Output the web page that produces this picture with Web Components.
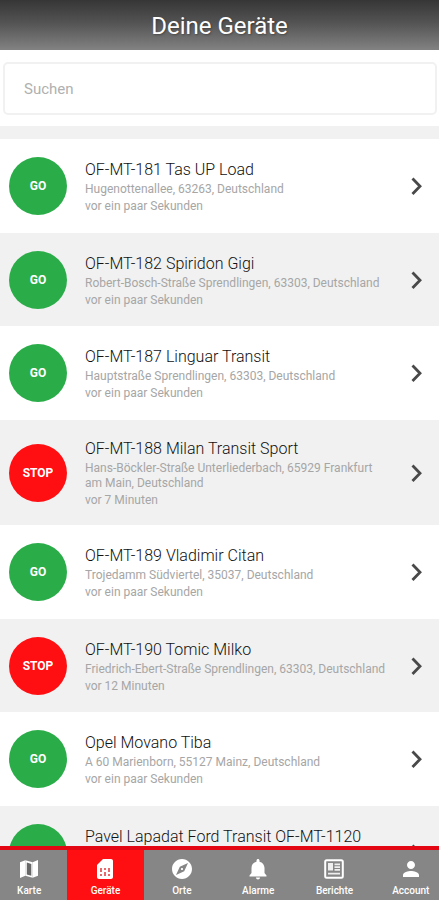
<!DOCTYPE html>
<html lang="de">
<head>
<meta charset="utf-8">
<meta name="viewport" content="width=device-width, initial-scale=1">
<title>Deine Geräte</title>
<style>
  html, body { height: 100%; margin: 0; }
  body { font-family: Roboto, "Liberation Sans", sans-serif; background: #fff; overflow: hidden; }
</style>
</head>
<body>
<app-screen>
  <app-header slot="header">Deine Geräte</app-header>
  <search-field slot="search" label="Suchen"></search-field>
  <device-row status="go"><span slot="name">OF-MT-181 Tas UP Load</span><span slot="address">Hugenottenallee, 63263, Deutschland</span><span slot="time">vor ein paar Sekunden</span></device-row>
  <device-row status="go" shaded><span slot="name">OF-MT-182 Spiridon Gigi</span><span slot="address">Robert-Bosch-Straße Sprendlingen, 63303, Deutschland</span><span slot="time">vor ein paar Sekunden</span></device-row>
  <device-row status="go"><span slot="name">OF-MT-187 Linguar Transit</span><span slot="address">Hauptstraße Sprendlingen, 63303, Deutschland</span><span slot="time">vor ein paar Sekunden</span></device-row>
  <device-row status="stop" shaded><span slot="name">OF-MT-188 Milan Transit Sport</span><span slot="address">Hans-Böckler-Straße Unterliederbach, 65929 Frankfurt am Main, Deutschland</span><span slot="time">vor 7 Minuten</span></device-row>
  <device-row status="go"><span slot="name">OF-MT-189 Vladimir Citan</span><span slot="address">Trojedamm Südviertel, 35037, Deutschland</span><span slot="time">vor ein paar Sekunden</span></device-row>
  <device-row status="stop" shaded><span slot="name">OF-MT-190 Tomic Milko</span><span slot="address">Friedrich-Ebert-Straße Sprendlingen, 63303, Deutschland</span><span slot="time">vor 12 Minuten</span></device-row>
  <device-row status="go"><span slot="name">Opel Movano Tiba</span><span slot="address">A 60 Marienborn, 55127 Mainz, Deutschland</span><span slot="time">vor ein paar Sekunden</span></device-row>
  <device-row status="go" shaded><span slot="name">Pavel Lapadat Ford Transit OF-MT-1120</span></device-row>
  <tab-bar slot="tabs">
    <tab-item icon="map">Karte</tab-item>
    <tab-item icon="sim" active>Geräte</tab-item>
    <tab-item icon="compass">Orte</tab-item>
    <tab-item icon="bell">Alarme</tab-item>
    <tab-item icon="report">Berichte</tab-item>
    <tab-item icon="person">Account</tab-item>
  </tab-bar>
</app-screen>

<script>
class BaseElement extends HTMLElement {
  render(html) {
    this.attachShadow({ mode: 'open' }).innerHTML = html;
  }
}

customElements.define('app-screen', class extends BaseElement {
  connectedCallback() {
    this.render(`
      <style>
        :host { display: flex; flex-direction: column; height: 100vh; overflow: hidden; }
        main { flex: 1; min-height: 0; overflow: hidden; display: flex; flex-direction: column; }
        .list { flex: 1; min-height: 0; overflow: hidden; border-top: 13px solid #f1f1f1; }
      </style>
      <slot name="header"></slot>
      <main>
        <slot name="search"></slot>
        <div class="list"><slot></slot></div>
      </main>
      <slot name="tabs"></slot>`);
  }
});

customElements.define('app-header', class extends BaseElement {
  connectedCallback() {
    this.render(`
      <style>
        :host { display: block; background: linear-gradient(#363636, #535353 45%, #828282); color: #fff; }
        h1 { margin: 0; padding: 11px 0 9px; font-size: 24px; line-height: 30px; font-weight: 400; text-align: center;
             text-shadow: 1px 1px 2px rgba(0, 0, 0, .3); }
      </style>
      <h1><slot></slot></h1>`);
  }
});

customElements.define('search-field', class extends BaseElement {
  connectedCallback() {
    const label = this.getAttribute('label');
    this.render(`
      <style>
        :host { display: block; padding: 12px 2px 11px 3px; }
        input { display: block; width: 100%; height: 53px; box-sizing: border-box; padding: 0 19px;
                border: 2px solid #f1f1f1; border-radius: 5px; background: #fff; outline: 0;
                font: 15px Roboto, "Liberation Sans", sans-serif; color: #333; }
        input::placeholder { color: #b0b0b0; opacity: 1; }
      </style>
      <input type="search" placeholder="${label}" aria-label="${label}">`);
  }
});

customElements.define('device-row', class extends BaseElement {
  connectedCallback() {
    const stop = this.getAttribute('status') === 'stop';
    this.render(`
      <style>
        :host { display: block; background: #fff; border-bottom: 1px solid #fff; }
        :host([shaded]) { background: #f1f1f1; border-bottom: 0; }
        a { display: flex; align-items: center; box-sizing: border-box; min-height: 93px; padding: 17px 8px 17px 9px;
            color: inherit; text-decoration: none; }
        .badge { flex: none; display: grid; place-items: center; width: 58px; height: 58px;
                 border-radius: 50%; background: #2aad49; color: #fff; font-size: 12px; font-weight: 700; }
        .badge.stop { background: #ff0f12; }
        .text { flex: 1; min-width: 0; margin: 0 13px 0 18px; }
        .name { font-size: 16px; line-height: 24px; font-weight: 300; color: #111; }
        .address { min-height: 15px; padding-bottom: 2px; }
        .small { font-size: 12px; line-height: 15px; color: #a6a6a6; }
        .time { min-height: 15px; }
        svg { flex: none; width: 28px; height: 28px; }
      </style>
      <a href="#">
        <span class="badge ${stop ? 'stop' : ''}">${stop ? 'STOP' : 'GO'}</span>
        <div class="text">
          <div class="name"><slot name="name"></slot></div>
          <div class="small address"><slot name="address"></slot></div>
          <div class="small time"><slot name="time"></slot></div>
        </div>
        <svg viewBox="0 0 28 28" aria-hidden="true"><path d="M9.500 6.500 L17 14.300 L9.500 22" fill="none" stroke="#494949" stroke-width="2.800"/></svg>
      </a>`);
  }
});

customElements.define('tab-bar', class extends BaseElement {
  connectedCallback() {
    this.render(`
      <style>
        :host { display: block; flex: none; overflow: hidden; background: #868686; border-top: 4px solid #e30613; }
        nav { display: grid; grid-template-columns: repeat(6, 1fr); margin: 0 -10px 0 -9px; }
      </style>
      <nav><slot></slot></nav>`);
  }
});

const ICONS = {
  map: '<path d="M3 5.300 L8.300 3.300 V18.800 L3 20.900z M15.700 5.200 L21 3.100 V18.700 L15.700 20.700z"/><path d="M8.300 3.300 L15.700 5.200 V20.700 L8.300 18.800z"/><path d="M9.800 5.500 L14.300 6.900 V18.800 L9.800 17.400z" fill="#686868"/>',
  sim: '<path d="M10 2h8c1.100 0 2 .9 2 2v16c0 1.100-.9 2-2 2H6c-1.100 0-2-.9-2-2V8z"/><path d="M7 11h2v4H7zM11 11h2v2h-2zM15 11h2v4h-2zM7 17h2v2H7zM11 15h2v4h-2zM15 17h2v2h-2z" fill="#e8696b"/>',
  compass: '<path fill-rule="evenodd" d="M12 10.900c-.61 0-1.100.49-1.100 1.100s.49 1.100 1.100 1.100c.61 0 1.100-.49 1.100-1.100s-.49-1.100-1.100-1.100zM12 2C6.480 2 2 6.480 2 12s4.480 10 10 10 10-4.480 10-10S17.520 2 12 2zm2.190 12.190L6 18l3.810-8.190L18 6l-3.810 8.190z"/>',
  bell: '<path d="M12 22.500c1.100 0 2-.9 2-2h-4c0 1.100.89 2 2 2zM18.500 16v-5c0-3.070-1.900-5.640-5-6.320V3.500c0-.83-.67-1.500-1.500-1.500s-1.500.67-1.500 1.500v1.180c-3.100.68-5 3.240-5 6.320v5l-2 2.500v1h17v-1z"/>',
  report: '<rect x="3.200" y="3.200" width="17.600" height="17.600" rx="1.500" fill="#868686" stroke="#fff" stroke-width="2"/><path d="M6 6h5v7.500H6zM12.500 6.500h5.500v1.700h-5.500zM12.500 9.300h5.500v1.700h-5.500zM12.500 12.100h5.500v1.700h-5.500zM6 15.800h12v1.700H6z" fill="#eee"/>',
  person: '<path d="M12 12c2.210 0 4-1.790 4-4s-1.790-4-4-4-4 1.790-4 4 1.790 4 4 4zm0 2c-2.670 0-8 1.340-8 4v2h16v-2c0-2.660-5.330-4-8-4z"/>'
};

customElements.define('tab-item', class extends BaseElement {
  connectedCallback() {
    this.render(`
      <style>
        :host { display: block; }
        :host([active]) { background: #ff0f12; }
        a { display: flex; flex-direction: column; align-items: center; gap: 3px; padding: 7px 0 2px;
            color: #fff; text-decoration: none; font-size: 10px; line-height: 14px; font-weight: 500; }
        svg { display: block; width: 24px; height: 24px; fill: #fff; }
      </style>
      <a href="#" ${this.hasAttribute('active') ? 'aria-current="page"' : ''}>
        <svg viewBox="0 0 24 24" aria-hidden="true">${ICONS[this.getAttribute('icon')]}</svg>
        <span><slot></slot></span>
      </a>`);
  }
});
</script>
</body>
</html>
